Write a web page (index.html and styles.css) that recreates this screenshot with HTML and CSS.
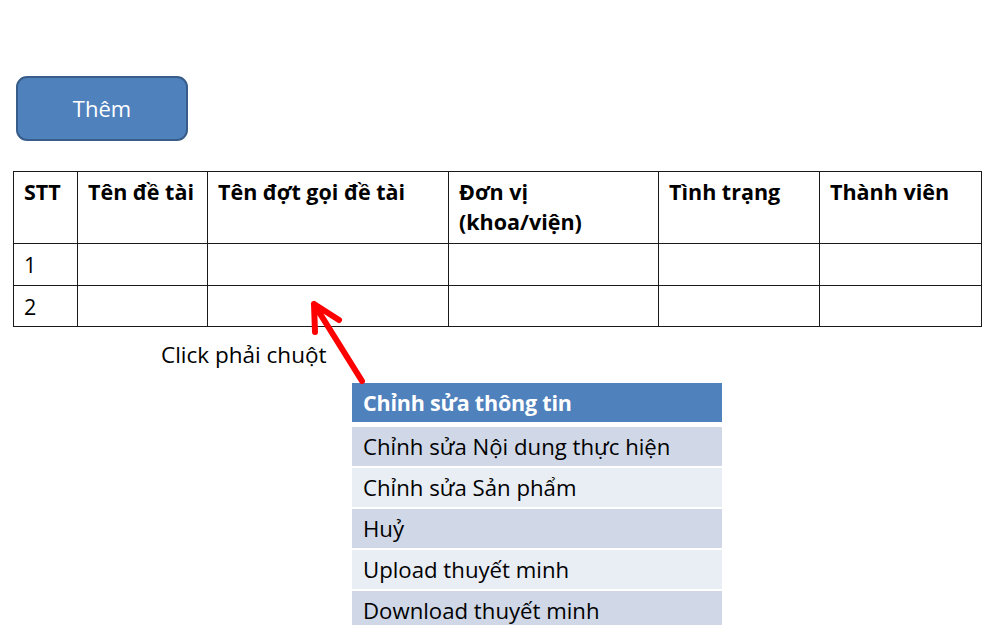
FILE: index.html
```html
<!DOCTYPE html>
<html lang="vi">
<head>
<meta charset="utf-8">
<title>Đề tài</title>
<link rel="stylesheet" href="styles.css">
</head>
<body>
<main class="slide">
  <button class="add-btn" type="button">Thêm</button>

  <table class="grid">
    <colgroup>
      <col class="c-stt"><col class="c-ten"><col class="c-dot"><col class="c-donvi"><col class="c-tt"><col class="c-tv">
    </colgroup>
    <thead>
      <tr class="head-row">
        <th>STT</th>
        <th>Tên đề tài</th>
        <th>Tên đợt gọi đề tài</th>
        <th>Đơn vị<br>(khoa/viện)</th>
        <th>Tình trạng</th>
        <th>Thành viên</th>
      </tr>
    </thead>
    <tbody>
      <tr class="r1"><td>1</td><td></td><td></td><td></td><td></td><td></td></tr>
      <tr class="r2"><td>2</td><td></td><td></td><td></td><td></td><td></td></tr>
    </tbody>
  </table>

  <p class="hint">Click phải chuột</p>

  <ul class="menu">
    <li class="menu-head">Chỉnh sửa thông tin</li>
    <li class="menu-item odd">Chỉnh sửa Nội dung thực hiện</li>
    <li class="menu-item even">Chỉnh sửa Sản phẩm</li>
    <li class="menu-item odd">Huỷ</li>
    <li class="menu-item even">Upload thuyết minh</li>
    <li class="menu-item odd">Download thuyết minh</li>
  </ul>

  <svg class="arrow" width="991" height="625" viewBox="0 0 991 625" aria-hidden="true">
    <path d="M362 381 L314 304 M315 332 L314 304 L339 320" fill="none" stroke="#ff0000" stroke-width="6" stroke-linecap="round" stroke-linejoin="round"/>
  </svg>
</main>
</body>
</html>
```

FILE: styles.css
```css
html, body {
  margin: 0;
  padding: 0;
  overflow: hidden;
  background: #ffffff;
}

.slide {
  position: relative;
  width: 991px;
  height: 625px;
  display: flex;
  flex-direction: column;
  align-items: flex-start;
  font-family: "Open Sans", Lato, "Liberation Sans", sans-serif;
  color: #000;
}

.add-btn {
  display: flex;
  align-items: center;
  justify-content: center;
  flex: 0 0 auto;
  margin: 76px 0 0 16px;
  width: 172px;
  height: 65px;
  box-sizing: border-box;
  background: #4f81bd;
  border: 2px solid #385d8a;
  border-radius: 11px;
  color: #ffffff;
  font-family: "Open Sans", sans-serif;
  font-size: 22px;
  line-height: 1;
  padding: 0 0 2px 0;
  cursor: pointer;
}

.grid {
  flex: 0 0 auto;
  margin: 30px 0 0 13px;
  border-collapse: collapse;
  table-layout: fixed;
  width: 968px;
  font-size: 21.5px;
}

.c-stt { width: 64px; }
.c-ten { width: 130px; }
.c-dot { width: 241px; }
.c-donvi { width: 210px; }
.c-tt { width: 161px; }
.c-tv { width: 162px; }

.grid th,
.grid td {
  border: 1px solid #1a1a1a;
  padding: 0 0 0 10px;
  text-align: left;
}

.grid th {
  vertical-align: top;
  padding-top: 5px;
  line-height: 30px;
  font-weight: 700;
}

.head-row { height: 72px; }
.r1 { height: 42px; }
.r2 { height: 41px; }

.grid td {
  vertical-align: middle;
  line-height: 26px;
  padding-top: 1px;
}

.hint {
  flex: 0 0 auto;
  margin: 14px 0 0 161px;
  font-size: 22.5px;
  line-height: 28px;
}

.menu {
  flex: 0 0 auto;
  list-style: none;
  margin: 14px 0 0 352px;
  padding: 0;
  width: 370px;
  display: flex;
  flex-direction: column;
  gap: 2px;
  font-size: 22.2px;
}

.menu li {
  flex: 0 0 auto;
  height: 39px;
  line-height: 39px;
  padding-left: 11px;
  white-space: nowrap;
}

.menu-head {
  background: #4f81bd;
  color: #ffffff;
  font-weight: 700;
  font-size: 21.5px;
  margin-bottom: 3px;
  letter-spacing: -0.2px;
}

.menu-item.odd { background: #d0d8e8; }
.menu-item.even { background: #e9edf4; }

.arrow {
  position: absolute;
  left: 0;
  top: 0;
  pointer-events: none;
}
```
